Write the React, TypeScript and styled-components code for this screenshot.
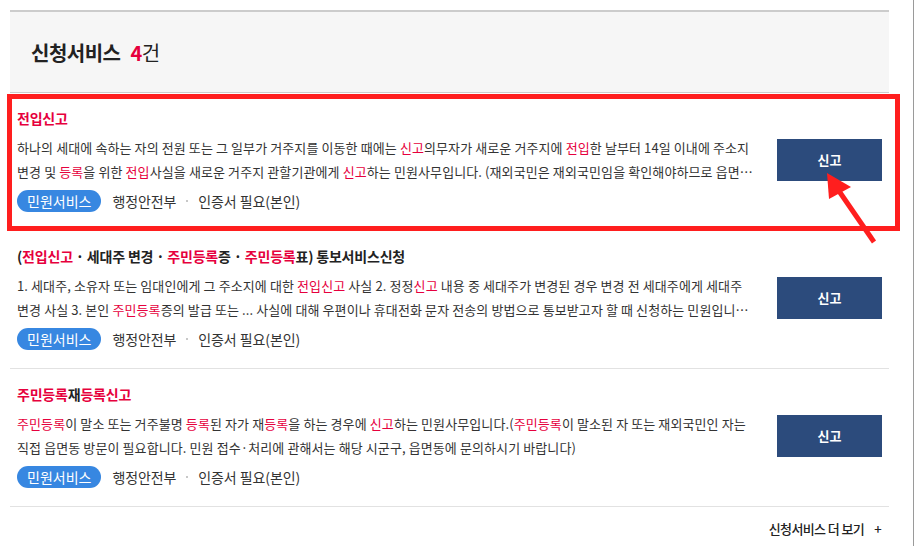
import React from "react";
import styled, { createGlobalStyle } from "styled-components";

const Global = createGlobalStyle`
  html, body { margin: 0; padding: 0; background: #fff; }
  body { font-family: "Noto Sans CJK KR", "Noto Sans", sans-serif; color: #333; }
`;

const Frame = styled.div`
  width: 914px;
  height: 546px;
  border-right: 1px solid #9a9a9a;
  box-sizing: border-box;
  padding: 10px 24px 0 10px;
  overflow: hidden;
`;

const Header = styled.div`
  height: 80px;
  background: #f6f6f6;
  border-top: 2px solid #cccccc;
  border-bottom: 1px solid #cccccc;
  display: flex;
  align-items: center;
  padding-left: 21px;
  gap: 10px;
  font-size: 20px;
  letter-spacing: -0.5px;
`;

const HeaderTitle = styled.span`
  font-weight: 700;
  color: #222;
`;

const Count = styled.span`
  color: #222;
  font-weight: 400;
  b { color: #e6003d; font-weight: 700; }
`;

const List = styled.ul`
  list-style: none;
  margin: 0;
  padding: 0;
`;

const Item = styled.li<{ $highlight?: boolean }>`
  position: relative;
  display: flex;
  align-items: center;
  gap: 22px;
  padding: 14px 7px 18px 7px;
  border-bottom: 1px solid #e2e2e2;
  ${(p) => (p.$highlight ? "border-bottom-color: transparent;" : "")}
`;

const Highlight = styled.div`
  position: absolute;
  left: -3px;
  right: -11px;
  top: 1px;
  bottom: -1px;
  border: 5px solid #ff1e1e;
  pointer-events: none;
`;

const Content = styled.div`
  flex: 1;
  min-width: 0;
`;

const Title = styled.h3`
  margin: 0;
  font-size: 14px;
  line-height: 22px;
  font-weight: 700;
  color: #222;
  letter-spacing: -0.2px;
`;

const Em = styled.em`
  font-style: normal;
  color: #e6003d;
`;

const Desc = styled.p`
  margin: 7px 0 0;
  font-size: 13px;
  line-height: 24px;
  color: #333;
  letter-spacing: 0.1px;
  display: -webkit-box;
  -webkit-line-clamp: 2;
  -webkit-box-orient: vertical;
  overflow: hidden;
`;

const Meta = styled.div`
  margin-top: 6px;
  display: flex;
  align-items: center;
  font-size: 14px;
  line-height: 22px;
  color: #333;
  letter-spacing: -0.1px;
`;

const Pill = styled.span`
  display: inline-flex;
  align-items: center;
  height: 22px;
  padding: 0 10px;
  border-radius: 11px;
  background: #3787e1;
  color: #fff;
  font-size: 14px;
  letter-spacing: 0;
  margin-right: 11px;
`;

const Dot = styled.span`
  width: 2px;
  height: 2px;
  background: #c8c8c8;
  margin: 0 10px;
`;

const Button = styled.button`
  flex: none;
  width: 105px;
  height: 42px;
  border: none;
  background: #2c4b7c;
  color: #fff;
  font-family: inherit;
  font-size: 13px;
  font-weight: 700;
  cursor: pointer;
`;

const Arrow = styled.svg`
  position: absolute;
  right: 11px;
  top: 78px;
  width: 54px;
  height: 72px;
  overflow: visible;
  pointer-events: none;
`;

const More = styled.a`
  display: flex;
  justify-content: flex-end;
  align-items: center;
  gap: 10px;
  padding: 12px 8px 0 0;
  font-size: 13px;
  font-weight: 500;
  color: #222;
  letter-spacing: -0.6px;
  text-decoration: none;
  line-height: 20px;
`;

type Piece = string | { r: string };

const render = (parts: Piece[]) =>
  parts.map((p, i) => (typeof p === "string" ? <React.Fragment key={i}>{p}</React.Fragment> : <Em key={i}>{p.r}</Em>));

const items: { title: Piece[]; desc: Piece[]; highlight?: boolean }[] = [
  {
    title: [{ r: "전입신고" }],
    desc: [
      "하나의 세대에 속하는 자의 전원 또는 그 일부가 거주지를 이동한 때에는 ",
      { r: "신고" },
      "의무자가 새로운 거주지에 ",
      { r: "전입" },
      "한 날부터 14일 이내에 주소지 변경 및 ",
      { r: "등록" },
      "을 위한 ",
      { r: "전입" },
      "사실을 새로운 거주지 관할기관에게 ",
      { r: "신고" },
      "하는 민원사무입니다. (재외국민은 재외국민임을 확인해야하므로 읍면동을 방문하여 신고하여야 합니다.)",
    ],
    highlight: true,
  },
  {
    title: ["(", { r: "전입신고" }, " · 세대주 변경 · ", { r: "주민등록" }, "증 · ", { r: "주민등록" }, "표) 통보서비스신청"],
    desc: [
      "1. 세대주, 소유자 또는 임대인에게 그 주소지에 대한 ",
      { r: "전입신고" },
      " 사실 2. 정정",
      { r: "신고" },
      " 내용 중 세대주가 변경된 경우 변경 전 세대주에게 세대주 변경 사실 3. 본인 ",
      { r: "주민등록" },
      "증의 발급 또는 ... 사실에 대해 우편이나 휴대전화 문자 전송의 방법으로 통보받고자 할 때 신청하는 민원입니다 …",
    ],
  },
  {
    title: [{ r: "주민등록" }, "재", { r: "등록신고" }],
    desc: [
      { r: "주민등록" },
      "이 말소 또는 거주불명 ",
      { r: "등록" },
      "된 자가 재",
      { r: "등록" },
      "을 하는 경우에 ",
      { r: "신고" },
      "하는 민원사무입니다.(",
      { r: "주민등록" },
      "이 말소된 자 또는 재외국민인 자는 직접 읍면동 방문이 필요합니다. 민원 접수·처리에 관해서는 해당 시군구, 읍면동에 문의하시기 바랍니다)",
    ],
  },
];

export default function App() {
  return (
    <>
      <Global />
      <Frame>
        <Header>
          <HeaderTitle>신청서비스</HeaderTitle>
          <Count>
            <b>4</b>건
          </Count>
        </Header>
        <List>
          {items.map((it, i) => (
            <Item key={i} $highlight={it.highlight}>
              <Content>
                <Title>{render(it.title)}</Title>
                <Desc>{render(it.desc)}</Desc>
                <Meta>
                  <Pill>민원서비스</Pill>
                  행정안전부
                  <Dot />
                  인증서 필요(본인)
                </Meta>
              </Content>
              <Button>신고</Button>
              {it.highlight && (
                <>
                  <Highlight />
                  <Arrow viewBox="0 0 54 72">
                    <line x1="50" y1="71" x2="15" y2="20" stroke="#ff1e1e" strokeWidth="5" />
                    <polygon points="3,2 5,28 27,16" fill="#ff1e1e" />
                  </Arrow>
                </>
              )}
            </Item>
          ))}
        </List>
        <More href="#">
          신청서비스 더 보기<span>+</span>
        </More>
      </Frame>
    </>
  );
}
